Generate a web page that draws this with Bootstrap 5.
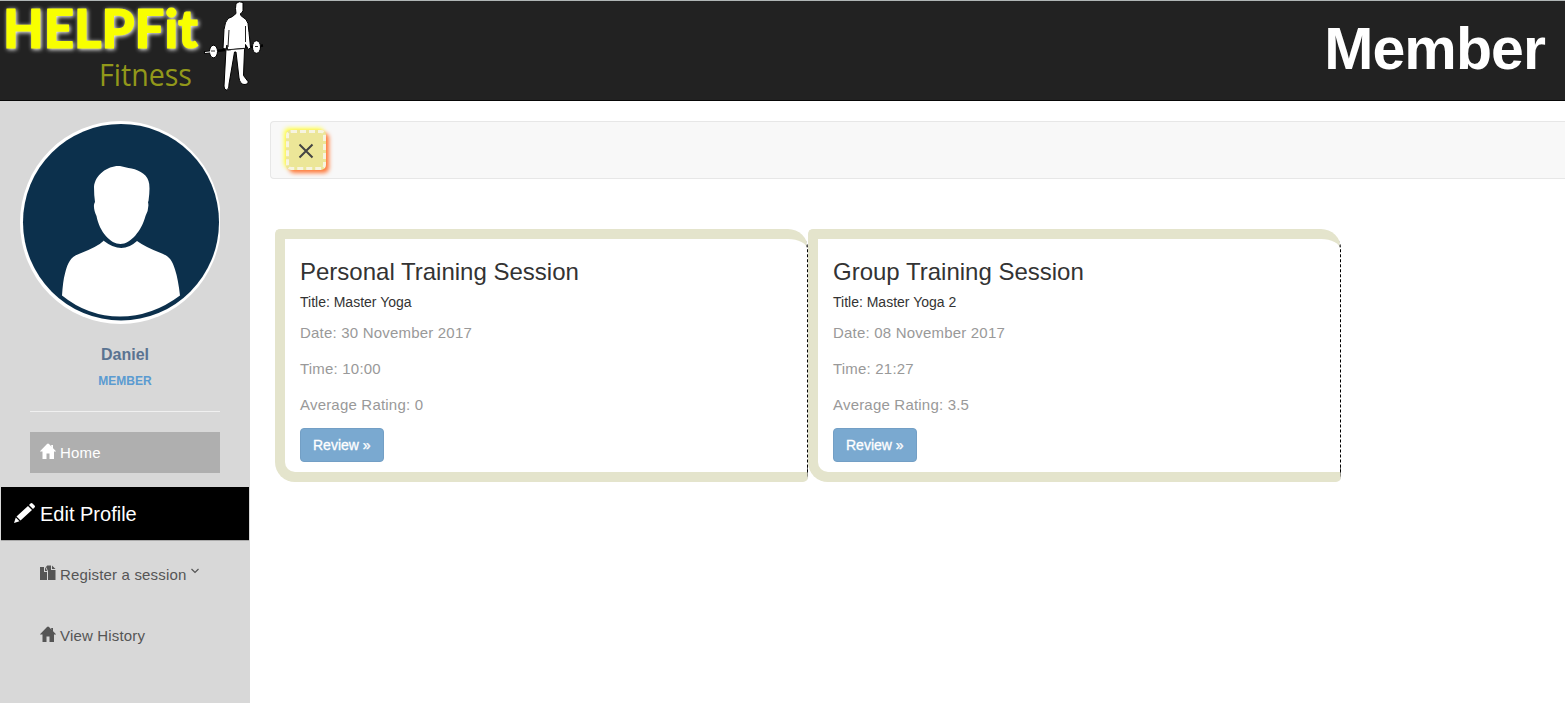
<!DOCTYPE html>
<html lang="en">
<head>
<meta charset="utf-8">
<meta name="viewport" content="width=device-width, initial-scale=1">
<title>HELPFit Fitness - Member</title>
<link href="https://cdn.jsdelivr.net/npm/bootstrap@5.3.0/dist/css/bootstrap.min.css" rel="stylesheet">
<style>
body{font-family:"Liberation Sans",Arial,sans-serif;font-size:14px;line-height:20px;color:#333;background:#fff;height:100vh;overflow:hidden}
.topbar{height:101px;background:#222;border-top:1px solid #b0b6b6;border-bottom:1px solid #080808;padding-right:20px}
.topbar h1{font-size:59px;font-weight:700;line-height:66px;color:#fff;padding-bottom:4px;letter-spacing:-.9px}
.brand-logo{display:block;margin-top:-1px;overflow:visible}
.logo-main{font:900 53px Lato,sans-serif;fill:#f8ff00;stroke:#f8ff00;stroke-width:1.2;stroke-linejoin:round;filter:drop-shadow(1px 1.5px 2px #fff)}
.logo-sub{font:400 31px "Open Sans",sans-serif;fill:#92981a}
.sidebar{width:250px;background:#d8d8d8;flex:none}
.avatar{display:block;margin:20px 0 0 20px}
.user-name{color:#5a7391;font-size:16px;font-weight:600;margin-top:21px;line-height:20px}
.user-role{color:#5b9bd1;font-size:12px;font-weight:600;line-height:17px;margin-top:8px}
.divider{height:1px;background:#f0f0f0;margin:21px 30px 20px}
.side-nav .nav-link{font-size:15px;line-height:21px;letter-spacing:.17px;color:#555;padding:10px;margin:0 30px 20px;white-space:nowrap;display:flex}
.side-nav svg{flex:none;fill:currentColor}
.side-nav .nav-link.active{background:#afafaf;color:#fff}
.side-nav .nav-link.edit{background:#000;color:#fff;font-size:20px;letter-spacing:0;line-height:23px;margin:-6px 1px 13px;padding:16px 12px 14px;border:1px solid #aaa;border-width:0 0 1px;height:54px}
.strip{height:58px;margin:20px 0 50px 20px;border:1px solid #e7e7e7;border-right:0;border-radius:4px 0 0 4px;background:#f8f8f8;padding:8px 15px}
.toggle{width:40px;height:40px;padding:1px 0 0;display:flex;align-items:center;justify-content:center;background:#ece698;border:3px dashed #f7f4e0;border-radius:5px;box-shadow:3px 3px 4px #ff7a3c,-2px -2px 4px #ffff45;color:#444}
.sessions{margin-left:25px}
.session{width:533px;height:253px;border:10px solid #e4e4cc;border-right:1px dashed #000;border-radius:5px 20px 5px 20px;padding:20px 15px 0}
.session h2{font-size:24px;line-height:26px;margin:0 0 10px;font-weight:400;color:#333}
.session .topic{font-size:14px;line-height:15px;color:#333;margin:0 0 10px}
.session p{font-size:15px;line-height:26px;letter-spacing:.2px;color:#999;margin:0 0 10px}
.btn-review{--bs-btn-bg:#7aa9d0;--bs-btn-border-color:#739fc5;--bs-btn-color:#fff;--bs-btn-hover-bg:#6499c8;--bs-btn-hover-color:#fff;font-size:14px;line-height:20px;padding:6px 12px;border-radius:4px;-webkit-text-stroke:.3px #fff}
</style>
</head>
<body class="d-flex flex-column">
<header class="topbar d-flex justify-content-between">
  <svg class="brand-logo" width="270" height="100" viewBox="0 0 270 100" role="img" aria-label="HELPFit Fitness">
    <text class="logo-main" x="3" y="48" textLength="195" lengthAdjust="spacingAndGlyphs">HELPFit</text>
    <text class="logo-sub" x="99" y="86" textLength="93" lengthAdjust="spacingAndGlyphs">Fitness</text>
    <path d="M204 52.500l59-7" stroke="#000" stroke-width="2.500"/>
    <g fill="#fff" stroke="#000" stroke-width="1" stroke-linejoin="round">
      <path d="M226 49l-2 37q0 4 2.500 4 3-1 2.500-6l5.500-32 1.500 0 3 26q1 6 5 6.500 4.500 0 4-3l-4.500-6 1-26z"/>
      <path d="M236 3.500q3-3 7-1v8q-1 3-2.500 3-.5 2 1.500 3 5 2.500 6 7l1 9 1.500 15-2 2-3-5 0 4-18 1.500-.5-5-1 4-3-.5 1-19q1-8 4-11 5-1.500 8-5-1-5 0-10z"/>
      <ellipse cx="213.500" cy="51.500" rx="4" ry="6.300"/><ellipse cx="256.500" cy="47" rx="4" ry="6.300"/>
    </g>
    <path d="M229 30l-1 17M245.500 26l0 16M225 50l23-2" fill="none" stroke="#222"/>
    <path d="M205 52.500l9-1M253 47.500l4-.5M231 50.500l13-1" stroke="#fff" stroke-width="1.200"/><path d="M211 51h4M255 46.500h3" stroke="#333"/>
  </svg>
  <h1 class="m-0 align-self-center">Member</h1>
</header>
<div class="d-flex flex-grow-1">
  <aside class="sidebar">
    <svg class="avatar" width="200" height="203" viewBox="20 121 200 203" role="img" aria-label="Profile picture">
      <ellipse cx="120.500" cy="222.500" rx="100.500" ry="101.500" fill="#fff"/>
      <ellipse cx="121" cy="222.200" rx="98" ry="98.300" fill="#0c304c"/>
      <path d="M120 166c-11-1-25 8-26 21q0 9 1 15c-2 3-1 9 1.500 14 3 16 14 28 24 28s21-13 25-28q4-8 2.500-14l.5-1q2-15 0-20c-2-8-12-12-20-13zM104 240.500q-6 6-24 13c-9 3-12 8-15 20q-2 7-3 22 26 21 58 21t60-21q-2-17-5-26c-3-10-6-13-13-16q-16-6-25-12.500-15 14-33 0z" fill="#fff"/>
    </svg>
    <div class="user-name text-center">Daniel</div>
    <div class="user-role text-center">MEMBER</div>
    <div class="divider"></div>
    <nav class="side-nav nav flex-column flex-nowrap">
      <a class="nav-link active" href="#"><svg class="me-1" width="16" height="18" viewBox="0 0 16 18"><path d="M8 1.500q.6 0 1 .5L16.200 9.500H14V17H9.500v-5.500h-3V17H2.500V9.500H-.2L7 2q.5-.5 1-.5zM11 3h2v5z"/></svg>Home</a>
      <a class="nav-link edit" href="#"><svg class="me-1" width="23" height="22" viewBox="0 0 23 22"><path d="M17.500.5q1-1 2 0L21.500 2.500q1 1 0 2L20 6 16 2zM15 3l4 4L7.500 17.500l-4-4zM2.800 14.500l3.700 3.700L1 20z"/></svg>Edit Profile</a>
      <a class="nav-link" href="#"><svg class="me-1" width="16" height="18" viewBox="0 0 16 18"><path d="M0 3h4v5h3v8H0zM5 3l2.300 4H5zM7.200 1.500H11V6h4.500v10H8V7L6 3zM12 1.500L15.500 5H12z"/></svg>Register a session<svg width="10" height="10" viewBox="0 0 10 10" class="ms-1"><path d="M1.500 5l3.500 3.500L8.500 5" fill="none" stroke="currentColor" stroke-width="1.200"/></svg></a>
      <a class="nav-link" href="#"><svg class="me-1" width="16" height="18" viewBox="0 0 16 18"><path d="M8 1.500q.6 0 1 .5L16.200 9.500H14V17H9.500v-5.500h-3V17H2.500V9.500H-.2L7 2q.5-.5 1-.5zM11 3h2v5z"/></svg>View History</a>
    </nav>
  </aside>
  <main class="flex-grow-1">
    <div class="strip"><button class="btn toggle" type="button" aria-label="Close menu"><svg width="16" height="16" viewBox="0 0 16 16"><path d="M1.500 1.500l13 13M14.500 1.500l-13 13" stroke="currentColor" stroke-width="2"/></svg></button></div>
    <div class="sessions d-flex">
      <section class="session">
        <h2>Personal Training Session</h2>
        <div class="topic">Title: Master Yoga</div>
        <p>Date: 30 November 2017</p><p>Time: 10:00</p><p>Average Rating: 0</p>
        <a class="btn btn-review" href="#">Review »</a>
      </section>
      <section class="session">
        <h2>Group Training Session</h2>
        <div class="topic">Title: Master Yoga 2</div>
        <p>Date: 08 November 2017</p><p>Time: 21:27</p><p>Average Rating: 3.5</p>
        <a class="btn btn-review" href="#">Review »</a>
      </section>
    </div>
  </main>
</div>
<script src="https://cdn.jsdelivr.net/npm/bootstrap@5.3.0/dist/js/bootstrap.bundle.min.js"></script>
</body>
</html>
